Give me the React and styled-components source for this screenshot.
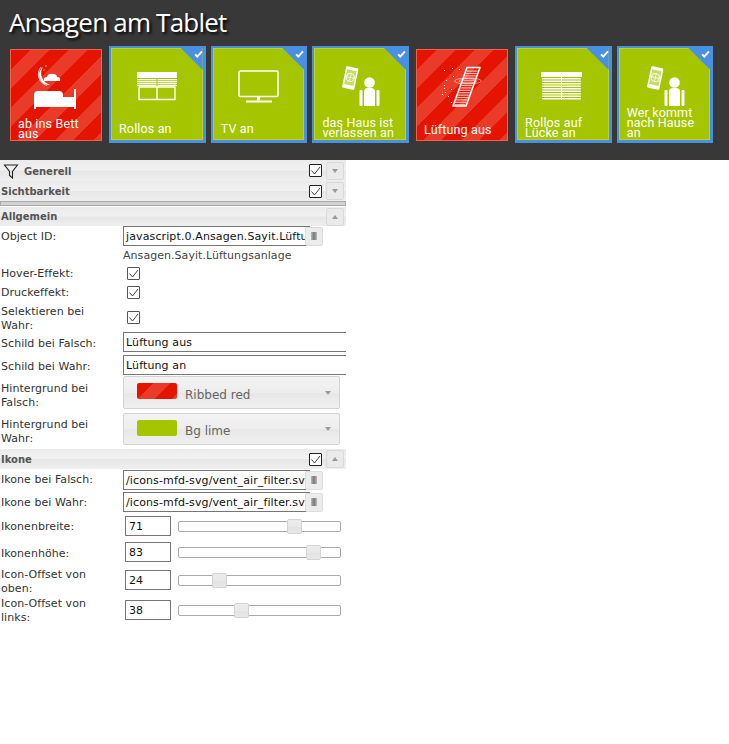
import React from "react";
import styled, { createGlobalStyle } from "styled-components";

const Global = createGlobalStyle`
  html, body { margin: 0; padding: 0; background: #fff; }
  body { font-family: "DejaVu Sans", sans-serif; font-size: 11px; color: #333; }
`;

const Page = styled.div`
  width: 729px;
  height: 744px;
  overflow: hidden;
  background: #fff;
`;

const Hero = styled.header`
  height: 160px;
  background: #383838;
  box-sizing: border-box;
  padding: 4px 0 0 8px;
`;

const Title = styled.h1`
  margin: 0 0 0 1px;
  height: 42px;
  font: 400 26px/36px "Open Sans", sans-serif;
  letter-spacing: -0.8px;
  color: #fff;
  text-shadow: 2px 2px 3px #000;
`;

const TileRow = styled.div`
  display: flex;
  gap: 5px;
  align-items: center;
`;

const TileBase = styled.div`
  position: relative;
  box-sizing: border-box;
  display: flex;
  flex-direction: column;
  justify-content: flex-end;
  color: #fff;
  font: 400 12.5px Roboto, sans-serif;
  letter-spacing: 0.15px;
`;

const RedTile = styled(TileBase)`
  width: 92px;
  height: 92px;
  margin: 0 2px;
  border: 1px solid #f0604a;
  padding: 0 0 1px 7px;
  background: repeating-linear-gradient(
    135deg,
    #e51400 0 14px,
    #ea3a28 14px 27px
  );
`;

const OnTile = styled(TileBase)`
  width: 96.7px;
  height: 97px;
  border-style: solid;
  border-color: #4a90e2;
  border-width: 2px 3px 3px 2px;
  padding: 0 0 2px 8px;
  background: #a5c500;
  box-shadow: inset 0 0 0 1px #b7d12e;
`;

const Corner = styled.span`
  position: absolute;
  top: 0;
  right: 0;
  width: 22px;
  height: 22px;
  background: #4a90e2;
  clip-path: polygon(0 0, 100% 0, 100% 100%);
`;

const Tick = styled.svg`
  position: absolute;
  top: 2px;
  right: 0;
  width: 9px;
  height: 8px;
`;

const TileIcon = styled.svg`
  position: absolute;
  left: ${(p) => p.$x}px;
  top: ${(p) => p.$x}px;
  width: 92px;
  height: 92px;
`;

const TileLabel = styled.div`
  position: relative;
  line-height: ${(p) => (p.$single ? 18 : 10)}px;
  white-space: pre;
`;

const Editor = styled.section`
  width: 346px;
  overflow: hidden;
`;

const Bar = styled.div`
  display: flex;
  align-items: center;
  box-sizing: border-box;
  height: ${(p) => p.$h || 20}px;
  padding-left: 1px;
  background: linear-gradient(#ebebeb 0%, #f1f1f1 48%, #e6e6e6 52%, #efefef 100%);
`;

const BarTitle = styled.span`
  flex: 1;
  font: 700 10px/14px "DejaVu Sans", sans-serif;
  color: #555;
  transform: translateY(${(p) => p.$dy ?? 1}px);
`;

const Funnel = styled.svg`
  width: 16px;
  height: 16px;
  margin: 0 5px 0 2px;
  flex: none;
`;

const BoxWrap = styled.span`
  display: block;
  width: 13px;
  height: 13px;
  flex: none;
  box-sizing: border-box;
  border: 1px solid ${(p) => (p.$dark ? "#222" : "#555")};
  border-radius: 1px;
  background: #fff;
`;

const BoxTick = styled.svg`
  display: block;
  width: 11px;
  height: 11px;
`;

const Toggle = styled.span`
  display: flex;
  align-items: center;
  justify-content: center;
  box-sizing: border-box;
  width: 18px;
  height: 18px;
  margin: 0 2px 0 4px;
  border: 1px solid #d9d9d9;
  border-radius: 2px;
  background: #eaeaea;
`;

const Arrow = styled.span`
  display: block;
  width: 0;
  height: 0;
  border-left: 3.5px solid transparent;
  border-right: 3.5px solid transparent;
  ${(p) => (p.$up ? "border-bottom" : "border-top")}: 4px solid #999;
`;

const Divider = styled.div`
  box-sizing: border-box;
  height: 5px;
  margin-bottom: 1px;
  border: 1px solid #a9a9a9;
  background: #d2d2d2;
`;

const Row = styled.div`
  display: grid;
  grid-template-columns: 123px 1fr;
  align-items: center;
  height: ${(p) => p.$h}px;
  margin-bottom: ${(p) => p.$gap || 0}px;
`;

const Label = styled.label`
  padding-left: 1px;
  font: 400 11px/14px "DejaVu Sans", sans-serif;
  letter-spacing: 0.05px;
  color: #333;
  transform: translateY(${(p) => p.$dy || 0}px);
  width: 108px;
`;

const Field = styled.div`
  display: flex;
  align-items: center;
  min-width: 0;
  padding-left: ${(p) => p.$pad || 0}px;
`;

const Input = styled.div`
  box-sizing: border-box;
  width: ${(p) => p.$w}px;
  height: 20px;
  flex: none;
  border: 1px solid #767676;
  ${(p) => p.$open && "border-right: 0;"}
  padding-left: 2px;
  font: 400 11px/20px "DejaVu Sans", sans-serif;
  letter-spacing: 0.12px;
  color: #111;
  white-space: nowrap;
  overflow: hidden;
  background: #fff;
`;

const Browse = styled.span`
  display: flex;
  align-items: center;
  justify-content: center;
  box-sizing: border-box;
  width: 18px;
  height: 19px;
  flex: none;
  margin-left: -5px;
  border: 1px solid #ddd;
  border-radius: 2px;
  background: #ececec;
  position: relative;
`;

const BrowseGlyph = styled.span`
  display: block;
  width: 6px;
  height: 8px;
  background: linear-gradient(90deg, #bbb, #777 50%, #bbb);
`;

const NameText = styled.div`
  font: 400 11px/14px "DejaVu Sans", sans-serif;
  letter-spacing: 0.05px;
  color: #444;
  padding-top: 1px;
`;

const Select = styled.div`
  display: flex;
  align-items: center;
  box-sizing: border-box;
  width: 217px;
  height: ${(p) => p.$h}px;
  padding: 0 8px 0 13px;
  border: 1px solid #d3d3d3;
  border-radius: 2px;
  background: linear-gradient(#f3f3f3 0%, #ededed 50%, #e7e7e7 52%, #f0f0f0 100%);
`;

const Swatch = styled.span`
  display: block;
  flex: none;
  width: 40px;
  height: 16px;
  margin: -3px 8px 0 0;
  border-radius: 2px;
  background: ${(p) => p.$bg};
`;

const SelectText = styled.span`
  flex: 1;
  font: 400 12px/16px "DejaVu Sans", sans-serif;
  color: #666;
  padding-top: ${(p) => p.$pt}px;
`;

const NumberBox = styled.div`
  box-sizing: border-box;
  width: 46px;
  height: 20px;
  flex: none;
  margin-left: 2px;
  border: 1px solid #767676;
  padding-left: 3px;
  font: 400 11px/20px "DejaVu Sans", sans-serif;
  letter-spacing: 0.05px;
  color: #111;
`;

const Track = styled.div`
  position: relative;
  box-sizing: border-box;
  width: 163px;
  height: 11px;
  margin-left: 7px;
  border: 1px solid #aaa;
  border-radius: 2px;
  background: #fff;
`;

const Thumb = styled.span`
  position: absolute;
  top: -3px;
  box-sizing: border-box;
  width: 15px;
  height: 15px;
  border: 1px solid #d3d3d3;
  border-radius: 2px;
  background: linear-gradient(#ececec 0%, #e9e9e9 50%, #e2e2e2 52%, #e8e8e8 100%);
`;

const Spacer = styled.div`
  height: ${(p) => p.$h}px;
`;

const Check = ({ dark }) => (
  <BoxWrap $dark={dark}>
    <BoxTick viewBox="0 0 11 11">
      <path d="M1.5 5.5 L4.5 9 L10 2" fill="none" stroke="#444" strokeWidth="1" />
    </BoxTick>
  </BoxWrap>
);

const BedIcon = () => (
  <g fill="#fff">
    <path d="M24 60V46q0-4 4-4h21q4 0 4 4v2h11v-8h2v20h-2v-2H26v2z" />
    <path d="M33 18a10 10 0 0 0 7 18a12 12 0 0 1-7-18z" />
    <path d="M31 18a11.5 11.5 0 0 0 6 18.5" fill="none" stroke="#fff" strokeWidth=".8" />
    <path d="M34 32q-1-4 3-4q1-4 6-3q4 0 4 3q4 0 3 4z" />
    <circle cx="36" cy="17" r=".7" />
    <circle cx="34" cy="21" r=".5" />
  </g>
);

const Blind = ({ x, w, stripes }) =>
  stripes.map((y) => <rect key={x + "-" + y} x={x} y={y} width={w} height="1.3" fill="#fff" />);

const WindowIcon = () => (
  <g>
    <rect x="26" y="24" width="40" height="6" fill="#fff" />
    <Blind x={26} w={40} stripes={[31, 33, 35, 37]} />
    <path d="M46 30v9" stroke="#a5c500" strokeWidth="1" />
    <path d="M28 39v12.5h36V39M46 39v12.5M28 39h36" fill="none" stroke="#fff" strokeWidth="1.4" />
  </g>
);

const TvIcon = () => (
  <g>
    <rect x="26" y="23" width="39" height="25.5" rx="1.5" fill="none" stroke="#fff" strokeWidth="1.6" />
    <rect x="44" y="49" width="3" height="3.5" fill="#fff" />
    <rect x="33" y="52.5" width="26" height="2" fill="#fff" />
  </g>
);

const PhonePerson = () => (
  <g>
    <g transform="rotate(12 36 30)">
      <rect x="30" y="19" width="12.5" height="22" rx="1.5" fill="#fff" />
      <rect x="31.5" y="22" width="9.5" height="15" fill="#c8dc6a" />
      <circle cx="36.2" cy="29.5" r="4" fill="none" stroke="#fff" strokeWidth=".9" />
      <path d="M32 29.5h8.5M36.2 25.5v8" stroke="#fff" strokeWidth=".7" />
    </g>
    <circle cx="55.5" cy="34.5" r="5.3" fill="#fff" />
    <path d="M50 58V44q0-4 4-4h3q4 0 4 4v14z" fill="#fff" />
    <rect x="45.5" y="42" width="3" height="16" rx="1" fill="#fff" />
    <rect x="62.5" y="42" width="3" height="16" rx="1" fill="#fff" />
  </g>
);

const VentIcon = () => {
  const dots = [[28, 21], [36, 19], [43, 20], [30, 31], [37, 27], [28, 36], [35, 40], [29, 43], [26, 45], [32, 47], [35, 53], [28, 39]];
  const bars = [];
  for (let i = 0; i < 15; i++) {
    const y = 21.5 + i * 2.4;
    const t = (y - 18) / 39;
    const x = 52 - 14.5 * t;
    bars.push(<rect key={i} x={x} y={y} width="11" height="1.2" fill="#fff" opacity=".7" />);
  }
  return (
    <g>
      {bars}
      <path d="M51 18.5h13L50 57H37z" fill="none" stroke="#fff" strokeWidth="1.6" strokeLinejoin="round" />
      <ellipse cx="52" cy="32" rx="13.5" ry="3" fill="none" stroke="#fff" strokeWidth=".6" opacity=".8" />
      <ellipse cx="52" cy="32" rx="9" ry="2" fill="none" stroke="#fff" strokeWidth=".6" opacity=".8" />
      {dots.map(([x, y]) => (
        <rect key={x + "," + y} x={x} y={y} width="1" height="1" fill="#fff" />
      ))}
    </g>
  );
};

const ShutterIcon = () => {
  const ys = [];
  for (let y = 30; y < 52; y += 2.5) ys.push(y);
  return (
    <g>
      <rect x="24" y="24" width="41" height="5" fill="#fff" />
      {ys.map((y) => (
        <rect key={y} x="25" y={y} width="39" height="1.5" rx=".7" fill="#fff" />
      ))}
      <rect x="44" y="24" width="1" height="28" fill="#fff" />
    </g>
  );
};

const OnCard = ({ lines, Icon, single }) => (
  <OnTile>
    <TileIcon $x={0} viewBox="0 0 92 92"><Icon /></TileIcon>
    <Corner />
    <Tick viewBox="0 0 11 10">
      <path d="M1.2 5.5 L4 8.2 L9.8 1.8" fill="none" stroke="#fff" strokeWidth="2.4" />
    </Tick>
    <TileLabel $single={single}>{lines.join("\n")}</TileLabel>
  </OnTile>
);

const OffCard = ({ lines, Icon, single }) => (
  <RedTile>
    <TileIcon $x={-1} viewBox="0 0 92 92"><Icon /></TileIcon>
    <TileLabel $single={single}>{lines.join("\n")}</TileLabel>
  </RedTile>
);

const RedSwatch = "repeating-linear-gradient(135deg, #e51400 0 12px, #ea3a28 12px 24px)";

const SliderRow = ({ label, value, at, h, dy }) => (
  <Row $h={h}>
    <Label $dy={dy}>{label}</Label>
    <Field>
      <NumberBox>{value}</NumberBox>
      <Track>
        <Thumb style={{ left: at }} />
      </Track>
    </Field>
  </Row>
);

export default function App() {
  return (
    <Page>
      <Global />
      <Hero>
        <Title>Ansagen am Tablet</Title>
        <TileRow>
          <OffCard lines={["ab ins Bett", "aus"]} Icon={BedIcon} />
          <OnCard lines={["Rollos an"]} Icon={WindowIcon} single />
          <OnCard lines={["TV an"]} Icon={TvIcon} single />
          <OnCard lines={["das Haus ist", "verlassen an"]} Icon={PhonePerson} />
          <OffCard lines={["Lüftung aus"]} Icon={VentIcon} single />
          <OnCard lines={["Rollos auf", "Lücke an"]} Icon={ShutterIcon} />
          <OnCard lines={["Wer kommt", "nach Hause", "an"]} Icon={PhonePerson} />
        </TileRow>
      </Hero>
      <Editor>
        <Bar $h={21}>
          <Funnel viewBox="0 0 16 16">
            <path d="M1.5 2h13L9.5 8.5V15L6.5 12.5V8.5z" fill="none" stroke="#222" strokeWidth="1.1" />
          </Funnel>
          <BarTitle>Generell</BarTitle>
          <Check dark />
          <Toggle><Arrow /></Toggle>
        </Bar>
        <Bar $h={20}>
          <BarTitle>Sichtbarkeit</BarTitle>
          <Check dark />
          <Toggle><Arrow /></Toggle>
        </Bar>
        <Divider />
        <Bar $h={19}>
          <BarTitle $dy={0}>Allgemein</BarTitle>
          <Toggle $up><Arrow $up /></Toggle>
        </Bar>
        <Row $h={20}>
          <Label $dy={1}>Object ID:</Label>
          <Field>
            <Input $w={187} $open>javascript.0.Ansagen.Sayit.Lüftungsanlage</Input>
            <Browse><BrowseGlyph /></Browse>
          </Field>
        </Row>
        <Row $h={18}>
          <span />
          <NameText>Ansagen.Sayit.Lüftungsanlage</NameText>
        </Row>
        <Row $h={19}>
          <Label>Hover-Effekt:</Label>
          <Field $pad={4}><Check /></Field>
        </Row>
        <Row $h={19}>
          <Label>Druckeffekt:</Label>
          <Field $pad={4}><Check /></Field>
        </Row>
        <Row $h={30}>
          <Label $dy={2}>Selektieren bei Wahr:</Label>
          <Field $pad={4}><Check /></Field>
        </Row>
        <Row $h={20} $gap={3}>
          <Label $dy={2}>Schild bei Falsch:</Label>
          <Field><Input $w={240}>Lüftung aus</Input></Field>
        </Row>
        <Row $h={20} $gap={1}>
          <Label $dy={2}>Schild bei Wahr:</Label>
          <Field><Input $w={240}>Lüftung an</Input></Field>
        </Row>
        <Row $h={33} $gap={4}>
          <Label $dy={3}>Hintergrund bei Falsch:</Label>
          <Field>
            <Select $h={33}>
              <Swatch $bg={RedSwatch} />
              <SelectText $pt={4}>Ribbed red</SelectText>
              <Arrow />
            </Select>
          </Field>
        </Row>
        <Row $h={32} $gap={4}>
          <Label $dy={3}>Hintergrund bei Wahr:</Label>
          <Field>
            <Select $h={32}>
              <Swatch $bg="#a5c500" />
              <SelectText $pt={3}>Bg lime</SelectText>
              <Arrow />
            </Select>
          </Field>
        </Row>
        <Bar $h={20}>
          <BarTitle>Ikone</BarTitle>
          <Check dark />
          <Toggle><Arrow $up /></Toggle>
        </Bar>
        <Spacer $h={1} />
        <Row $h={20} $gap={2}>
          <Label>Ikone bei Falsch:</Label>
          <Field>
            <Input $w={187} $open>/icons-mfd-svg/vent_air_filter.svg</Input>
            <Browse><BrowseGlyph /></Browse>
          </Field>
        </Row>
        <Row $h={20} $gap={1}>
          <Label $dy={1}>Ikone bei Wahr:</Label>
          <Field>
            <Input $w={187} $open>/icons-mfd-svg/vent_air_filter.svg</Input>
            <Browse><BrowseGlyph /></Browse>
          </Field>
        </Row>
        <SliderRow label="Ikonenbreite:" value="71" at={108} h={26} dy={1} />
        <SliderRow label="Ikonenhöhe:" value="83" at={127} h={26} dy={2} />
        <SliderRow label="Icon-Offset von oben:" value="24" at={33} h={30} dy={2} />
        <SliderRow label="Icon-Offset von links:" value="38" at={55} h={30} dy={1} />
      </Editor>
    </Page>
  );
}
